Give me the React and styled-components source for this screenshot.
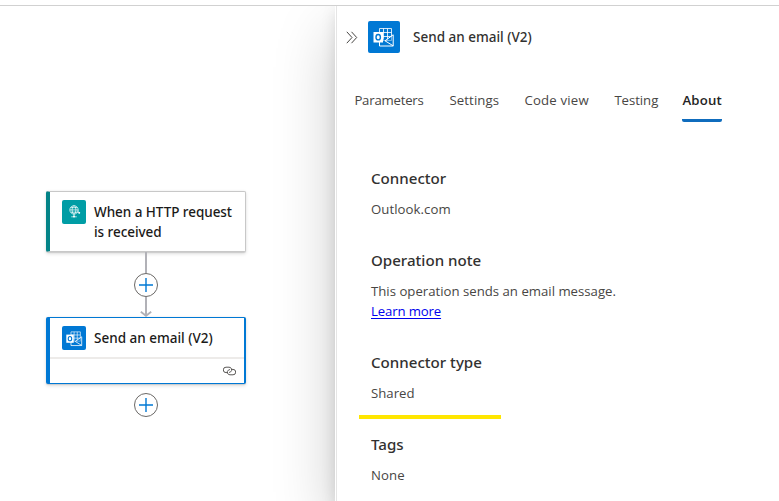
import React from 'react';
import styled, { createGlobalStyle } from 'styled-components';

const GlobalStyle = createGlobalStyle`
  *, *::before, *::after { box-sizing: border-box; }
  body {
    margin: 0;
    background: #fff;
    font-family: "Open Sans", "Noto Sans", sans-serif;
    overflow: hidden;
  }
  svg { display: block; flex: none; }
`;

const Page = styled.div`
  display: flex;
  flex-direction: column;
  width: 779px;
  height: 501px;
  background: #fff;
`;

const TopStrip = styled.header`
  flex: none;
  height: 6px;
  border-bottom: 1px solid #d1d1d1;
`;

const Workspace = styled.main`
  display: flex;
  flex: 1;
  min-height: 0;
  overflow: hidden;
`;

const Canvas = styled.section`
  flex: none;
  display: flex;
  flex-direction: column;
  align-items: center;
  width: 335px;
  padding: 185px 89px 0 46px;
`;

const Card = styled.article`
  flex: none;
  width: 200px;
  height: ${(p) => p.$height}px;
  display: flex;
  flex-direction: column;
  background: #fff;
  border-style: solid;
  border-color: ${(p) => (p.$selected ? '#0078d4' : '#c8c8c8')};
  border-width: ${(p) => (p.$selected ? '1px 2px 1px 4px' : '1px 1px 1px 4px')};
  border-left-color: ${(p) => p.$accent};
  border-radius: 2px;
  box-shadow: 0 1.6px 3.6px rgba(0, 0, 0, 0.13), 0 0.3px 0.9px rgba(0, 0, 0, 0.11);
`;

const CardHeader = styled.div`
  flex: 1;
  display: flex;
  align-items: flex-start;
  gap: 8px;
  padding: 8px 0 0 12px;
`;

const CardTitle = styled.h3`
  margin: 2px 0 0;
  color: #1b1a19;
  font: 500 13.5px/20px "Noto Sans", sans-serif;
  letter-spacing: ${(p) => p.$tracking || 0}px;
  white-space: pre-line;
`;

const CardFooter = styled.div`
  display: flex;
  justify-content: flex-end;
  align-items: center;
  height: 26px;
  padding-right: 8px;
  border-top: 2px solid #edebe9;
`;

const IconTile = styled.div`
  flex: none;
  display: flex;
  align-items: center;
  justify-content: center;
  width: ${(p) => p.$size}px;
  height: ${(p) => p.$size}px;
  border-radius: 2px;
  background: ${(p) => p.$color};
`;

const Connector = styled.div`
  display: flex;
  flex-direction: column;
  align-items: center;
`;

const Line = styled.div`
  width: 2px;
  height: ${(p) => p.$length}px;
  background: #b1b1b7;
`;

const AddButton = styled.button`
  display: flex;
  align-items: center;
  justify-content: center;
  width: 24px;
  height: 24px;
  margin-top: ${(p) => p.$gap || 0}px;
  padding: 0;
  border: 1px solid #6b6967;
  border-radius: 50%;
  background: #fff;
`;

const Panel = styled.aside`
  flex: 1;
  margin-left: 1px;
  border-left: 1px solid #e5e5e5;
  background: #fff;
  box-shadow: -1px 0 0 #fff, 0 25.6px 57.6px rgba(0, 0, 0, 0.22),
    0 4.8px 14.4px rgba(0, 0, 0, 0.13);
`;

const PanelHeader = styled.div`
  display: flex;
  align-items: center;
  height: 32px;
  margin: 15px 0 0 9px;
`;

const CollapseButton = styled.button`
  display: flex;
  width: 22px;
  padding: 0;
  border: 0;
  background: none;
`;

const PanelTitle = styled.h2`
  margin: 0 0 0 13px;
  color: #323130;
  font: 500 13.5px/20px "Noto Sans", sans-serif;
`;

const Tabs = styled.nav`
  display: flex;
  margin: 35px 0 0 17.4px;
`;

const Tab = styled.a`
  height: 34px;
  width: ${(p) => p.$width}px;
  padding-top: 2px;
  margin-right: ${(p) => p.$gap}px;
  color: #484644;
  font-size: 13.2px;
  line-height: 20px;
  letter-spacing: ${(p) => p.$tracking || 0}px;
  white-space: nowrap;
  ${(p) =>
    p.$active &&
    `
    color: #242424;
    font-weight: 600;
    background: linear-gradient(#0f6cbd, #0f6cbd) bottom / 100% 3px no-repeat;
    border-radius: 2px;
  `}
`;

const Details = styled.div`
  padding: 45px 0 0 34px;
`;

const Heading = styled.h4`
  margin: 0 0 10px;
  color: #323130;
  font: 500 15.1px/22px "Noto Sans", sans-serif;
`;

const Section = styled.section`
  margin-bottom: ${(p) => p.$after}px;
`;

const Value = styled.p`
  margin: 0;
  color: #484644;
  font-size: 13.2px;
  line-height: 20px;
  letter-spacing: ${(p) => p.$tracking || 0}px;
`;

const Link = styled.a`
  color: #0000ee;
  text-decoration: underline;
  text-underline-offset: 2px;
`;

const Highlight = styled.div`
  width: 142px;
  height: 4px;
  margin: 12px 0 14px -12px;
  background: #ffe600;
`;

const OutlookIcon = ({ size }) => (
  <svg width={size} height={size} viewBox="0 0 32 32" fill="none">
    <path d="M11.5 7.5h12v12h-12zM15.5 7.5v12M19.5 7.5v11M11.5 11.5h12M11.5 15.5h12" stroke="#fff" strokeOpacity=".9" strokeWidth=".9" />
    <path d="M11.5 15v10h13.7V14.2L18 19.5z" fill="#0078d4" fillOpacity=".45" />
    <path d="M11.5 20.5V25h13.7V13.8L17 19.8l8.2 5" stroke="#fff" strokeWidth="1" />
    <path d="M5.5 11h9.5v10.5H5.5z" fill="#fff" />
    <ellipse cx="10.2" cy="16.2" rx="2.2" ry="2.7" stroke="#0078d4" strokeWidth="1.4" />
  </svg>
);

const RequestIcon = () => (
  <svg width="24" height="24" viewBox="0 0 24 24" fill="none" stroke="#fff" strokeOpacity=".85" strokeWidth=".8">
    <circle cx="12" cy="9.9" r="4.2" />
    <path d="M7.8 9.9h8.4M8.6 7.6h6.8M8.6 12.2h6.8M12 14v2" />
    <ellipse cx="12" cy="9.9" rx="1.9" ry="4.2" />
    <path d="M9.2 16.8h5.6M16 10.5v2.3h2" />
    <circle cx="12" cy="16.6" r="1" fill="#fff" stroke="none" />
    <circle cx="17.3" cy="12.8" r=".9" fill="#fff" stroke="none" />
  </svg>
);

const PlusIcon = () => (
  <svg width="14" height="14" viewBox="0 0 14 14">
    <path d="M7 0v14M0 7h14" stroke="#0078d4" strokeWidth="1.4" />
  </svg>
);

const ArrowHead = () => (
  <svg width="12" height="6" viewBox="0 0 12 6">
    <path d="M.8 .8L6 4.8l5.2-4" fill="none" stroke="#b1b1b7" strokeWidth="1.8" />
    <path d="M6 0v5" stroke="#b1b1b7" strokeWidth="2" />
  </svg>
);

const LinkIcon = () => (
  <svg width="13" height="10" viewBox="0 0 13 10" fill="none" stroke="#484644" strokeWidth=".9">
    <path d="M4.3 6.6H3A2.6 2.6 0 0 1 3 1.2h3a2.6 2.6 0 0 1 1.6 4.7c-.4.3-.9.5-1.6.5" />
    <path d="M8.7 3.4H10a2.6 2.6 0 0 1 0 5.4H7a2.6 2.6 0 0 1-1.6-4.7c.4-.3.9-.5 1.6-.5" />
  </svg>
);

const ChevronsIcon = () => (
  <svg width="12" height="13" viewBox="0 0 12 13" fill="none" stroke="#484644" strokeWidth="1">
    <path d="M.8.8l5.2 5.7L.8 12.2M5.5.8l5.2 5.7-5.2 5.7" />
  </svg>
);

const tabs = [
  { label: 'Parameters', width: 70, gap: 25, tracking: -0.22 },
  { label: 'Settings', width: 50, gap: 25, tracking: 0.12 },
  { label: 'Code view', width: 65, gap: 25, tracking: 0.2 },
  { label: 'Testing', width: 44, gap: 24, tracking: -0.05 },
  { label: 'About', width: 40, gap: 0, tracking: 0.2, active: true },
];

export default function App() {
  return (
    <>
      <GlobalStyle />
      <Page>
        <TopStrip />
        <Workspace>
          <Canvas>
            <Card $height={61} $accent="#038387">
              <CardHeader>
                <IconTile $size={24} $color="#009da5"><RequestIcon /></IconTile>
                <CardTitle $tracking={-0.05}>{'When a HTTP request\nis received'}</CardTitle>
              </CardHeader>
            </Card>
            <Connector>
              <Line $length={20.5} />
              <AddButton aria-label="Insert step"><PlusIcon /></AddButton>
              <Line $length={14.5} />
              <ArrowHead />
            </Connector>
            <Card $height={67} $accent="#0078d4" $selected>
              <CardHeader>
                <IconTile $size={24} $color="#0078d4"><OutlookIcon size={25} /></IconTile>
                <CardTitle>Send an email (V2)</CardTitle>
              </CardHeader>
              <CardFooter><LinkIcon /></CardFooter>
            </Card>
            <AddButton $gap={8.5} aria-label="Add step"><PlusIcon /></AddButton>
          </Canvas>
          <Panel>
            <PanelHeader>
              <CollapseButton aria-label="Collapse"><ChevronsIcon /></CollapseButton>
              <IconTile $size={32} $color="#0078d4"><OutlookIcon size={32} /></IconTile>
              <PanelTitle>Send an email (V2)</PanelTitle>
            </PanelHeader>
            <Tabs>
              {tabs.map((t) => (
                <Tab key={t.label} $width={t.width} $gap={t.gap} $tracking={t.tracking} $active={t.active}>
                  {t.label}
                </Tab>
              ))}
            </Tabs>
            <Details>
              <Section $after={30}>
                <Heading>Connector</Heading>
                <Value $tracking={0.05}>Outlook.com</Value>
              </Section>
              <Section $after={30}>
                <Heading>Operation note</Heading>
                <Value>This operation sends an email message.</Value>
                <Value $tracking={-0.14}><Link>Learn more</Link></Value>
              </Section>
              <Section $after={0}>
                <Heading>Connector type</Heading>
                <Value>Shared</Value>
                <Highlight />
              </Section>
              <Section $after={0}>
                <Heading>Tags</Heading>
                <Value $tracking={0.1}>None</Value>
              </Section>
            </Details>
          </Panel>
        </Workspace>
      </Page>
    </>
  );
}
